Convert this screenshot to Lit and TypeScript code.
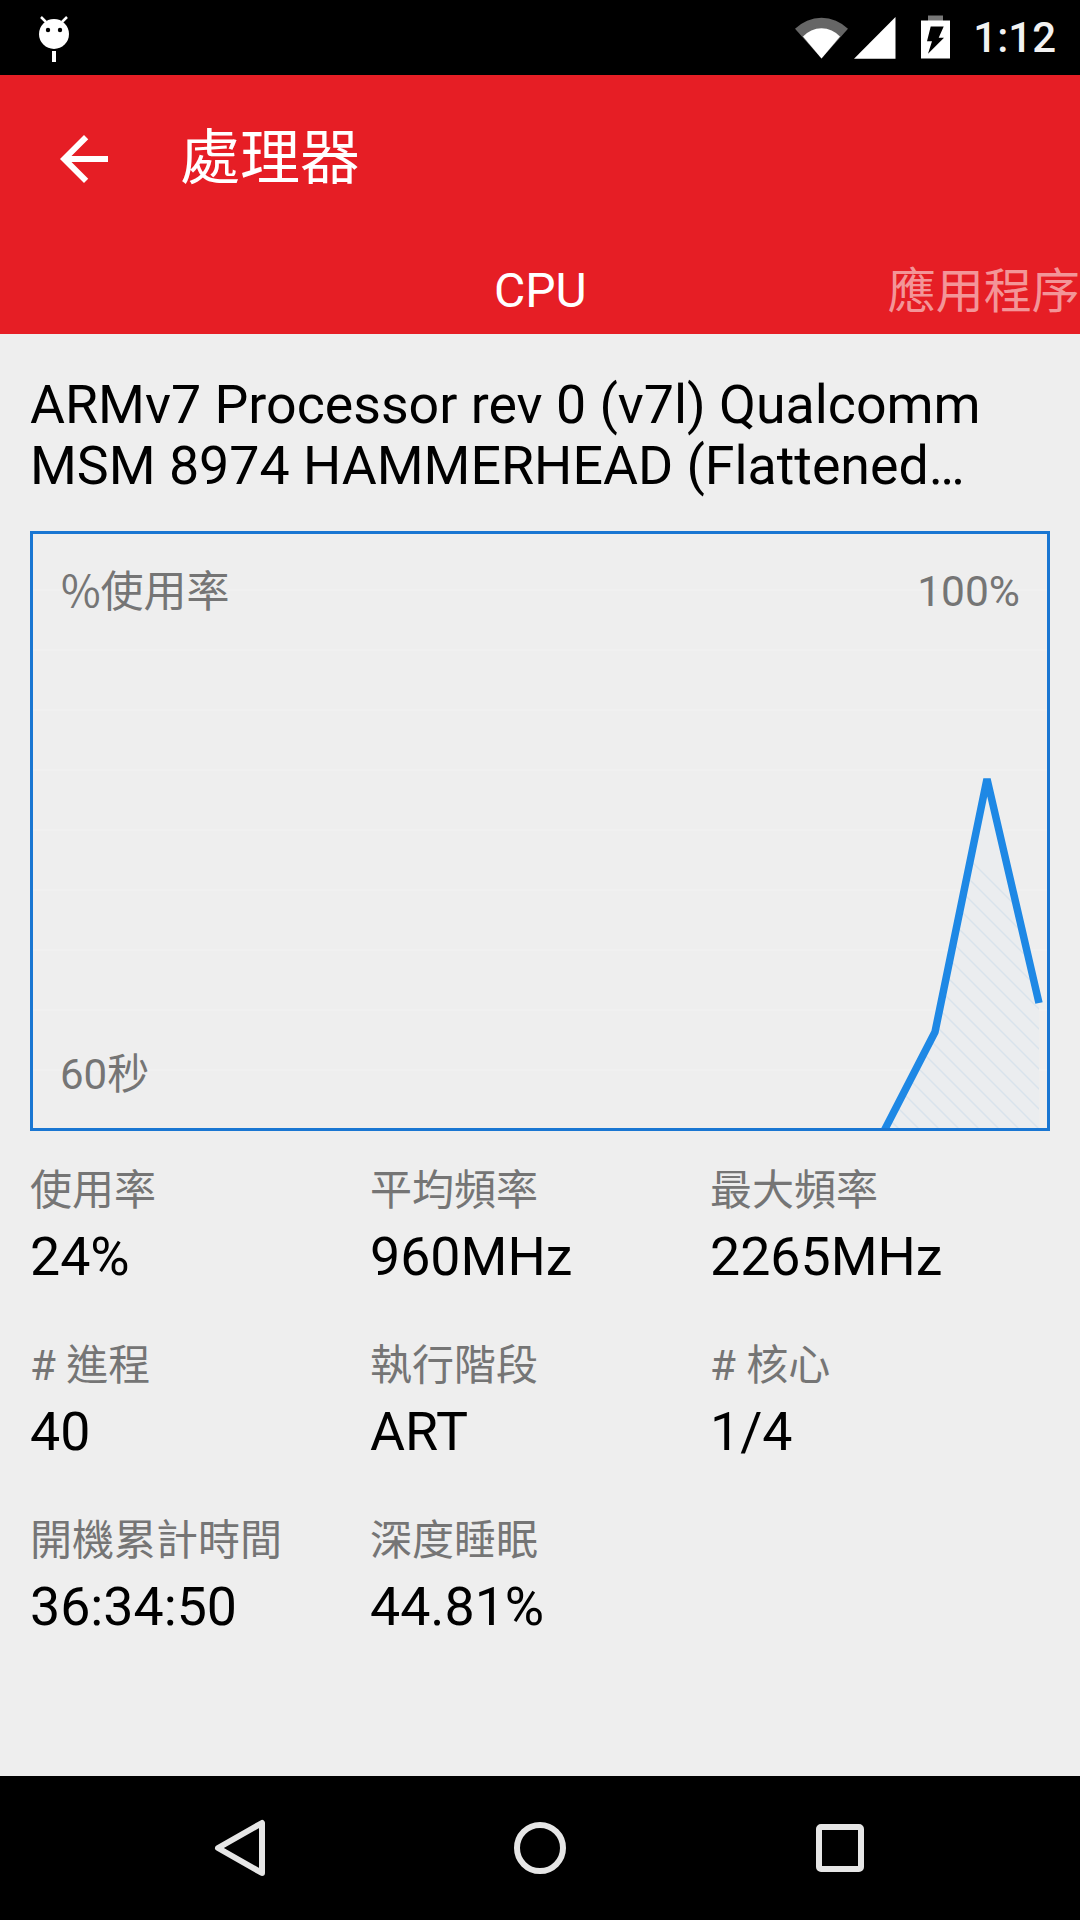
import { LitElement, html, css, svg } from "lit";
import { customElement } from "lit/decorators.js";

const STATS = [
  ["使用率", "24%"], ["平均頻率", "960MHz"], ["最大頻率", "2265MHz"],
  ["# 進程", "40"], ["執行階段", "ART"], ["# 核心", "1/4"],
  ["開機累計時間", "36:34:50"], ["深度睡眠", "44.81%"],
];

@customElement("app-root")
export class AppRoot extends LitElement {
  static styles = css`
    :host { display: flex; flex-direction: column; width: 1080px; height: 1920px; background: #eeeeee; overflow: hidden;
      font-family: Roboto, "Noto Sans CJK TC", sans-serif; }
    .status { height: 75px; background: #000; display: flex; align-items: center; color: #fff; flex: none; }
    .status svg { display: block; }
    .bug { margin-left: 34px; }
    .sys { margin-left: auto; }
    .time { font-size: 42px; font-weight: 500; line-height: 75px; margin: 0 24px 0 23px; color: #f2f2f2; }
    .appbar { height: 259px; background: #e61e25; flex: none; color: #fff; }
    .row { height: 168px; display: flex; align-items: center; padding-left: 48px; }
    .row svg { display: block; margin-right: 60px; }
    .title { font-size: 60px; line-height: 72px; }
    .tabs { height: 91px; display: flex; align-items: center; padding: 4px 0 0 494px; box-sizing: border-box; gap: 301px; font-size: 48px; white-space: nowrap; overflow: hidden; }
    .dim { color: rgba(255,255,255,.55); flex: none; margin-bottom: 8px; }
    .body { flex: 1; padding: 0 30px; }
    .desc { font-size: 53.7px; line-height: 61px; margin-top: 40px; color: #000; white-space: nowrap; height: 122px; }
    .chart { position: relative; margin-top: 35px; width: 1020px; height: 600px; box-sizing: border-box; border: 3px solid #1976d2; }
    .chart svg { display: block; position: absolute; left: 0; top: 0; }
    .lbl { position: absolute; font-size: 42px; line-height: 50px; color: #757575; }
    .tl { left: 28px; top: 29px; font-size: 43px; font-family: "Noto Sans CJK TC", sans-serif; }
    .tr { right: 27px; top: 33px; font-size: 42.5px; }
    .bl { left: 27px; top: 516px; }
    .stats { display: grid; grid-template-columns: repeat(3, 340px); grid-auto-rows: 175px; margin-top: 32px; }
    .k { font-size: 42px; line-height: 56px; color: #757575; white-space: nowrap; }
    .v { font-size: 53.7px; line-height: 64px; margin-top: 6px; color: #000; white-space: nowrap; }
    .nav { height: 144px; background: #000; flex: none; display: grid; grid-template-columns: repeat(3, 300px); justify-content: center; align-items: center; justify-items: center; }
    .nav svg { display: block; }
  `;

  chart() {
    const W = 1014, H = 594;
    const hatch = [];
    for (let k = -30; k < 10; k++) {
      const c = 431 + 20 * k;
      hatch.push(svg`<line x1=${c} y1="0" x2=${c + 600} y2="600" stroke="#d9e3ec" stroke-width="1.5"/>`);
    }
    const grid = [];
    for (let y = 56; y < H; y += 60) grid.push(svg`<line x1="0" x2=${W} y1=${y} y2=${y} stroke="#f1f1f1" stroke-width="1.5"/>`);
    return svg`<svg width=${W} height=${H} viewBox="0 0 ${W} ${H}">
      <defs><clipPath id="area"><path d="M852 596 L902 498 L954 245 L1006 469 L1006 596 Z"/></clipPath></defs>
      ${grid}
      <g clip-path="url(#area)"><rect width=${W} height=${H} fill="#ebedef"/>${hatch}</g>
      <path d="M851 597 L902 498 L954 245 L1006 469" fill="none" stroke="#1e88e5" stroke-width="7.500" stroke-linejoin="bevel"/>
    </svg>`;
  }

  render() {
    return html`
      <div class="status">
        <svg class="bug" width="40" height="50" viewBox="0 0 40 50">
          <path d="M7 4 L12 9 M33 4 L28 9" stroke="#fff" stroke-width="2.5"/>
          <circle cx="20" cy="21" r="15" fill="#fff"/>
          <circle cx="14" cy="17" r="2.2" fill="#000"/><circle cx="26" cy="17" r="2.2" fill="#000"/>
          <rect x="18" y="38" width="4" height="11" fill="#fff"/>
        </svg>
        <svg class="sys" width="155" height="48" viewBox="0 0 155 48">
          <path d="M0 14.800 A37.400 37.400 0 0 1 53 14.800 L26.500 44.500 Z" fill="#666"/>
          <path d="M8 22.500 A25 25 0 0 1 45 22.500 L26.500 44.500 Z" fill="#fff"/>
          <path d="M59 44.800 L100.500 3 L100.500 44.800 Z" fill="#fff"/>
          <rect x="133" y="1.500" width="15" height="5.500" fill="#777"/>
          <rect x="126" y="6.500" width="29" height="38" fill="#fff"/>
          <path d="M135.700 12.500 L148.700 12.500 L143.700 23.800 L149 23.800 L133 39.800 L137 27.200 L132 27.200 Z" fill="#000"/>
        </svg>
        <span class="time">1:12</span>
      </div>
      <div class="appbar">
        <div class="row">
          <svg width="72" height="72" viewBox="0 0 24 24"><path fill="#fff" d="M20 11H7.830l5.590-5.590L12 4l-8 8 8 8 1.410-1.410L7.830 13H20v-2z"/></svg>
          <span class="title">處理器</span>
        </div>
        <div class="tabs"><span>CPU</span><span class="dim">應用程序</span></div>
      </div>
      <div class="body">
        <div class="desc">ARMv7 Processor rev 0 (v7l) Qualcomm<br>MSM 8974 HAMMERHEAD (Flattened…</div>
        <div class="chart">
          ${this.chart()}
          <span class="lbl tl">%使用率</span>
          <span class="lbl tr">100%</span>
          <span class="lbl bl">60秒</span>
        </div>
        <div class="stats">
          ${STATS.map(([k, v]) => html`<div><div class="k">${k}</div><div class="v">${v}</div></div>`)}
        </div>
      </div>
      <div class="nav">
        <svg width="56" height="62" viewBox="0 0 56 62"><path d="M50 6 L50 56 L6 31 Z" fill="none" stroke="#e6e6e6" stroke-width="6" stroke-linejoin="round"/></svg>
        <svg width="56" height="56" viewBox="0 0 56 56"><circle cx="28" cy="28" r="23" fill="none" stroke="#e6e6e6" stroke-width="6"/></svg>
        <svg width="52" height="52" viewBox="0 0 52 52"><rect x="5" y="5" width="42" height="42" rx="2" fill="none" stroke="#e6e6e6" stroke-width="6" stroke-linejoin="round"/></svg>
      </div>
    `;
  }
}
